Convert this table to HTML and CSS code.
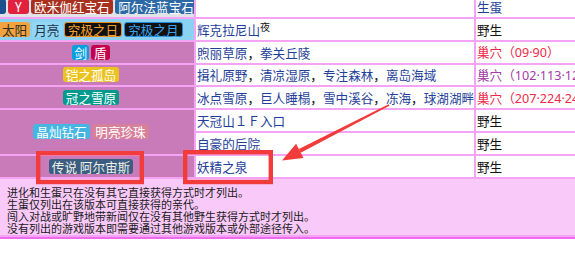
FILE: index.html
```html
<!DOCTYPE html>
<html lang="zh">
<head>
<meta charset="utf-8">
<title>获得方式</title>
<link rel="stylesheet" href="styles.css">
</head>
<body>
<div class="page">
  <table class="dex">
    <colgroup><col class="c1"><col class="c2"><col class="c3"></colgroup>
    <tbody>
      <tr>
        <td class="games g-gray"><div class="badges"><span class="b b-x">X</span><span class="b b-y">Y</span><span class="b b-or">欧米伽红宝石</span><span class="b b-as">阿尔法蓝宝石</span></div></td>
        <td class="loc"></td>
        <td class="how"><a class="lk">生蛋</a></td>
      </tr>
      <tr>
        <td class="games g-blue"><div class="badges"><span class="b b-sun">太阳</span><span class="b b-moon">月亮</span><span class="b b-us">究极之日</span><span class="b b-um">究极之月</span></div></td>
        <td class="loc"><a class="lk">辉克拉尼山</a><sup class="tm">夜</sup></td>
        <td class="how">野生</td>
      </tr>
      <tr>
        <td class="games g-purple"><div class="badges"><span class="b b-sword">剑</span><span class="b b-shield">盾</span></div></td>
        <td class="loc"><a class="lk">煦丽草原</a>，<a class="lk">拳关丘陵</a></td>
        <td class="how"><a class="den red">巢穴（09·90）</a></td>
      </tr>
      <tr>
        <td class="games g-purple"><div class="badges"><span class="b b-armor">铠之孤岛</span></div></td>
        <td class="loc"><a class="lk">揖礼原野</a>，<a class="lk">清凉湿原</a>，<a class="lk">专注森林</a>，<a class="lk">离岛海域</a></td>
        <td class="how"><a class="den violet">巢穴（102·113·124）</a></td>
      </tr>
      <tr>
        <td class="games g-purple"><div class="badges"><span class="b b-crown">冠之雪原</span></div></td>
        <td class="loc"><a class="lk">冰点雪原</a>，<a class="lk">巨人睡榻</a>，<a class="lk">雪中溪谷</a>，<a class="lk">冻海</a>，<a class="lk">球湖湖畔</a></td>
        <td class="how"><a class="den red">巢穴（207·224·246）</a></td>
      </tr>
      <tr>
        <td class="games g-purple" rowspan="2"><div class="badges"><span class="b b-bd">晶灿钻石</span><span class="b b-sp">明亮珍珠</span></div></td>
        <td class="loc"><a class="lk">天冠山１Ｆ入口</a></td>
        <td class="how">野生</td>
      </tr>
      <tr>
        <td class="loc"><a class="lk">自豪的后院</a></td>
        <td class="how">野生</td>
      </tr>
      <tr>
        <td class="games g-purple"><div class="badges"><span class="b b-pla">传说 阿尔宙斯</span></div></td>
        <td class="loc"><a class="lk">妖精之泉</a></td>
        <td class="how">野生</td>
      </tr>
      <tr>
        <td class="notes" colspan="3">进化和生蛋只在没有其它直接获得方式时才列出。<br>生蛋仅列出在该版本可直接获得的亲代。<br>闯入对战或旷野地带新闻仅在没有其他野生获得方式时才列出。<br>没有列出的游戏版本即需要通过其他游戏版本或外部途径传入。</td>
      </tr>
    </tbody>
  </table>
  <svg class="marks" width="575" height="260" viewBox="0 0 575 260" aria-hidden="true">
    <rect x="38.2" y="153.2" width="103.6" height="28.8" fill="none" stroke="#f23b3b" stroke-width="4.4"/>
    <rect x="185.2" y="152.2" width="85.6" height="29.8" fill="none" stroke="#f23b3b" stroke-width="4.4"/>
    <polygon points="389.4,105.7 388.6,104.3 298.9,149.1 300.7,152.7" fill="#f23b3b"/>
    <polygon points="282,160.5 296.1,143.8 303.5,158" fill="#f23b3b"/>
  </svg>
</div>
</body>
</html>
```

FILE: styles.css
```css
* { box-sizing: border-box; }

html, body {
  margin: 0;
  padding: 0;
  background: #fff;
  overflow: hidden;
}

body {
  font-family: "Noto Sans CJK SC", "Noto Sans", sans-serif;
  font-size: 12.6px;
  color: #111;
}

.page {
  position: relative;
  width: 575px;
  height: 260px;
  overflow: hidden;
}

.dex {
  border-collapse: separate;
  border-spacing: 2px;
  background: #f5a3f5;
  table-layout: fixed;
  width: 702px;
  margin: -5.8px 0 0 -14px;
  border-bottom: 2.3px solid #ee6aee;
}

.c1 { width: 206px; }
.c2 { width: 278px; }
.c3 { width: 210px; }

.dex td {
  height: 20.8px;
  padding: 0 1px;
  vertical-align: middle;
  line-height: 15px;
  white-space: nowrap;
  overflow: hidden;
}

.loc, .how { background: #fff; }

.games { padding: 0; text-align: center; }
.g-gray { background: #e1e3e6; }
.g-blue { background: #8bd1f1; }
.g-purple { background: #c87ab9; }

.badges {
  display: flex;
  justify-content: center;
  align-items: center;
  gap: 2px;
}

.b {
  flex-shrink: 0;
  display: block;
  padding: 0 3.3px;
  line-height: 15px;
  border-radius: 3px;
  color: #fff;
  white-space: nowrap;
}

.b-x { background: #1c4f8e; padding: 0 7px; }
.b-y { background: #e2213f; padding: 0 7px; }
.b-or { background: #a8301e; }
.b-as { background: #2d6aa5; }

.b-sun { background: #f2a23e; color: #2e2e22; padding: 0 2.5px; }
.b-moon { background: #93d6f6; color: #1e3348; padding: 0 2.5px; }
.b-us {
  background: #111;
  border: 1px solid #e88a1e;
  color: #f5a02a;
  line-height: 13px;
  padding: 0 3px;
}
.b-um {
  background: #111;
  border: 1px solid #2388d8;
  color: #3aa2ec;
  line-height: 13px;
  padding: 0 3px;
}

.b-sword { background: #04a0e0; padding: 0 2px; }
.b-shield { background: #c4004c; padding: 0 3px; }
.b-armor { background: #ecc21e; }
.b-crown { background: #009a8c; }
.b-bd { background: #45b6e2; }
.b-sp { background: #d7809a; }
.b-pla { background: #3b5d82; color: #f1f1e6; }

.lk { color: #1f3f99; text-decoration: none; }
.den {
  text-decoration: none;
  font-family: "Noto Sans", "Noto Sans CJK SC", sans-serif;
}
.red { color: #ee2a4a; }
.violet { color: #a23ca6; }

.tm {
  font-size: 10px;
  line-height: 0;
  vertical-align: 4px;
  color: #111;
}

.dex td.notes {
  height: auto;
  background: #f9caf9;
  padding: 7px 0 0 19px;
  font-size: 11px;
  line-height: 12.3px;
  white-space: normal;
  color: #1a1a1a;
}

.marks {
  position: absolute;
  left: 0;
  top: 0;
  pointer-events: none;
}
```
